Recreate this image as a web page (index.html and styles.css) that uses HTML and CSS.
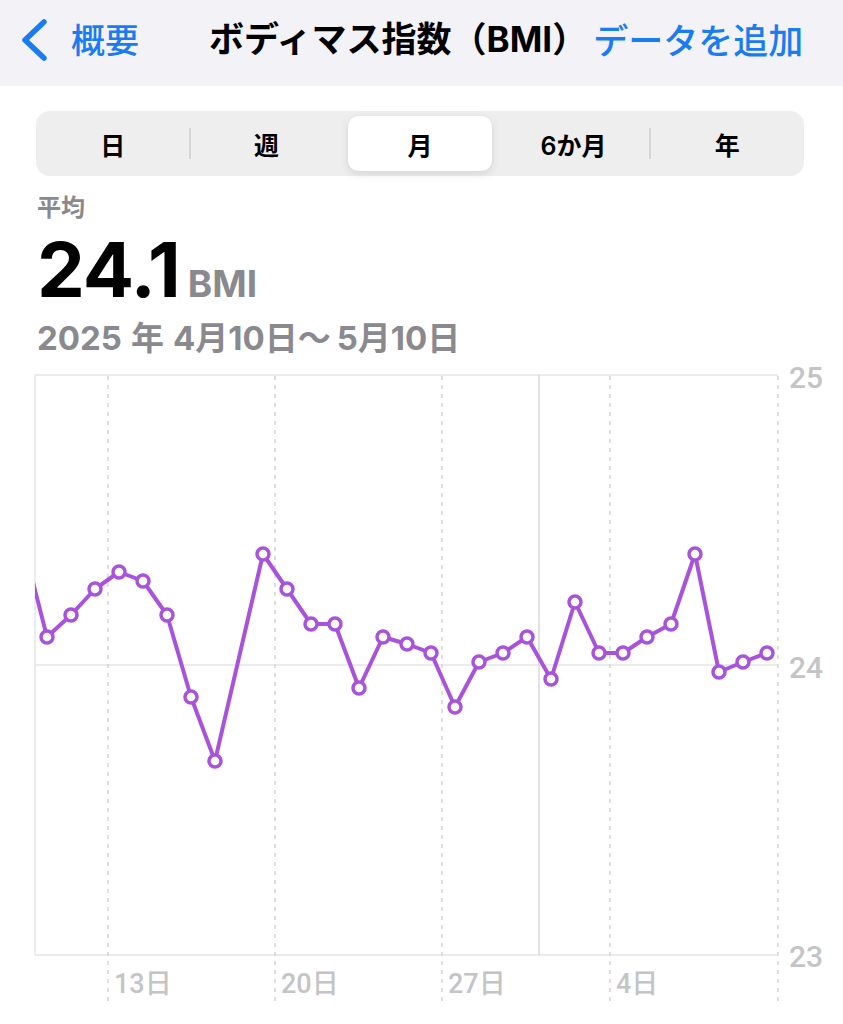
FILE: index.html
```html
<!DOCTYPE html>
<html lang="ja">
<head>
<meta charset="utf-8">
<title>ボディマス指数（BMI）</title>
<link rel="stylesheet" href="styles.css">
</head>
<body>
<header class="nav">
  <div class="back">
    <svg class="chev" width="30" height="42" viewBox="0 0 30 42"><path d="M25 3 L6 21 L25 39" fill="none" stroke="#1b7cf2" stroke-width="5.5" stroke-linecap="round" stroke-linejoin="round"/></svg>
    <span class="back-label">概要</span>
  </div>
  <h1 class="title">ボディマス指数（BMI）</h1>
  <span class="add">データを追加</span>
</header>
<main>
  <div class="seg">
    <div class="seg-item sep">日</div>
    <div class="seg-item">週</div>
    <div class="seg-item active">月</div>
    <div class="seg-item sep">6か月</div>
    <div class="seg-item">年</div>
  </div>
  <section class="stats">
    <div class="label">平均</div>
    <div class="value"><span class="num">24.1</span><span class="unit">BMI</span></div>
    <div class="range">2025<span class="g"></span>年<span class="g"></span>4月10日〜<span class="g2"></span>5月10日</div>
  </section>
  <div class="chart">
    <svg class="chart-svg" width="843" height="668" viewBox="0 356 843 668">
      <defs><clipPath id="plot"><rect x="35" y="364" width="743" height="600"/></clipPath></defs>
      <g stroke="#e6e6e8" stroke-width="1.5">
        <line x1="35" y1="375" x2="778" y2="375"/>
        <line x1="35" y1="665" x2="778" y2="665"/>
        <line x1="35" y1="955" x2="778" y2="955"/>
        <line x1="35" y1="375" x2="35" y2="955"/>
      </g>
      <line x1="539" y1="375" x2="539" y2="955" stroke="#d9d9dc" stroke-width="1.5"/>
      <g stroke="#d3d3d6" stroke-width="1.5" stroke-dasharray="4 5">
        <line x1="108" y1="376" x2="108" y2="1002"/>
        <line x1="275" y1="376" x2="275" y2="1002"/>
        <line x1="442" y1="376" x2="442" y2="1002"/>
        <line x1="610" y1="376" x2="610" y2="1002"/>
        <line x1="778" y1="376" x2="778" y2="1002"/>
      </g>
      <polyline clip-path="url(#plot)" fill="none" stroke="#a853dc" stroke-width="4" stroke-linejoin="round" points="23,543 47,637 71,615 95,589 119,572 143,581 167,615 191,697 215,761 263,554 287,589 311,624 335,624 359,688 383,637 407,644 431,653 455,707 479,662 503,653 527,637 551,679 575,602 599,653 623,653 647,637 671,624 695,554 719,672 743,662 767,653"/>
      <g fill="#fff" stroke="#a853dc" stroke-width="3.5">
        <circle cx="47" cy="637" r="6"/><circle cx="71" cy="615" r="6"/><circle cx="95" cy="589" r="6"/><circle cx="119" cy="572" r="6"/><circle cx="143" cy="581" r="6"/><circle cx="167" cy="615" r="6"/><circle cx="191" cy="697" r="6"/><circle cx="215" cy="761" r="6"/><circle cx="263" cy="554" r="6"/><circle cx="287" cy="589" r="6"/><circle cx="311" cy="624" r="6"/><circle cx="335" cy="624" r="6"/><circle cx="359" cy="688" r="6"/><circle cx="383" cy="637" r="6"/><circle cx="407" cy="644" r="6"/><circle cx="431" cy="653" r="6"/><circle cx="455" cy="707" r="6"/><circle cx="479" cy="662" r="6"/><circle cx="503" cy="653" r="6"/><circle cx="527" cy="637" r="6"/><circle cx="551" cy="679" r="6"/><circle cx="575" cy="602" r="6"/><circle cx="599" cy="653" r="6"/><circle cx="623" cy="653" r="6"/><circle cx="647" cy="637" r="6"/><circle cx="671" cy="624" r="6"/><circle cx="695" cy="554" r="6"/><circle cx="719" cy="672" r="6"/><circle cx="743" cy="662" r="6"/><circle cx="767" cy="653" r="6"/>
      </g>
      <g class="ylab">
        <text x="789" y="388">25</text>
        <text x="789" y="678">24</text>
        <text x="789" y="967">23</text>
      </g>
      <g class="xlab">
        <text x="114" y="993">13日</text>
        <text x="281" y="993">20日</text>
        <text x="448" y="993">27日</text>
        <text x="616" y="993">4日</text>
      </g>
    </svg>
  </div>
</main>
</body>
</html>
```

FILE: styles.css
```css
html, body {
  margin: 0;
  padding: 0;
  background: #ffffff;
  width: 843px;
  height: 1024px;
  overflow: hidden;
  font-family: Inter, "Noto Sans CJK JP", sans-serif;
}

.nav {
  height: 86px;
  background: #f2f2f7;
  display: flex;
  align-items: center;
  padding: 0 0 8px 19px;
  box-sizing: border-box;
  white-space: nowrap;
}

.back {
  display: flex;
  align-items: center;
  gap: 22px;
}

.chev {
  display: block;
  margin-top: 2px;
}

.back-label,
.add {
  font-family: "Noto Sans CJK JP", sans-serif;
  font-size: 35px;
  font-weight: 500;
  color: #1b7cf2;
  line-height: 42px;
}

.back-label {
  font-size: 34px;
}

.title {
  margin: 0 0 0 70px;
  font-family: Inter, "Noto Sans CJK JP", sans-serif;
  font-size: 35px;
  font-weight: 700;
  color: #000;
  line-height: 42px;
  letter-spacing: 0;
}

.add {
  margin-left: 6px;
}

.seg {
  margin: 25px 0 0 36px;
  width: 768px;
  height: 65px;
  background: #eeeeef;
  border-radius: 14px;
  display: grid;
  grid-template-columns: repeat(5, 1fr);
  padding: 5px 0;
  box-sizing: border-box;
}

.seg-item {
  position: relative;
  display: flex;
  align-items: center;
  justify-content: center;
  font-family: Inter, "Noto Sans CJK JP", sans-serif;
  font-size: 25px;
  font-weight: 600;
  color: #000;
  border-radius: 10px;
}

.seg-item.sep::after {
  content: "";
  position: absolute;
  right: -1px;
  top: 12px;
  bottom: 12px;
  width: 2px;
  background: #d6d6d8;
}

.seg-item.active {
  background: #ffffff;
  margin: 0 5px;
  box-shadow: 0 3px 8px rgba(0, 0, 0, 0.1), 0 0 1px rgba(0, 0, 0, 0.06);
}

.stats {
  padding-left: 37px;
  margin-top: 17px;
}

.label {
  font-family: "Noto Sans CJK JP", sans-serif;
  font-size: 24px;
  font-weight: 700;
  color: #8a8a8e;
  line-height: 25px;
}

.value {
  margin-top: 14px;
  line-height: 74px;
  height: 74px;
  white-space: nowrap;
}

.num {
  font-size: 76px;
  font-weight: 700;
  color: #000;
  letter-spacing: -1px;
}

.unit {
  font-size: 37px;
  font-weight: 700;
  color: #8a8a8e;
  margin-left: 8px;
}

.range {
  margin-top: 16px;
  font-size: 33px;
  font-weight: 700;
  color: #8a8a8e;
  line-height: 32px;
  white-space: nowrap;
}

.range .g {
  display: inline-block;
  width: 9px;
}

.range .g2 {
  display: inline-block;
  width: 6px;
}

.chart {
  margin-top: 2px;
  height: 668px;
}

.chart-svg {
  display: block;
}

.ylab text {
  font-family: Roboto, sans-serif;
  font-size: 30px;
  font-weight: 500;
  fill: #c4c4c7;
}

.xlab text {
  font-family: Roboto, "Noto Sans CJK JP", sans-serif;
  font-size: 27px;
  font-weight: 500;
  fill: #c4c4c7;
}
```
